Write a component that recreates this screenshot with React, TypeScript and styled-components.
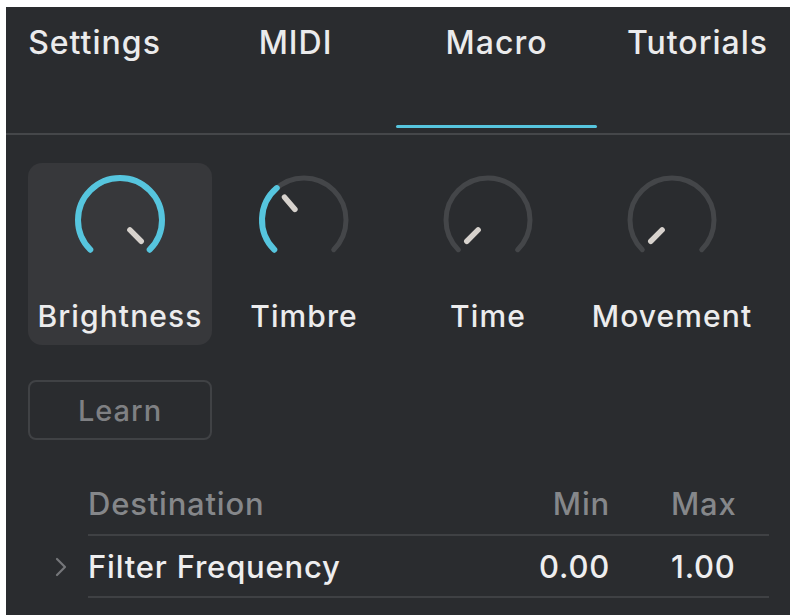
import React from "react";
import styled, { createGlobalStyle, css } from "styled-components";

const GlobalStyle = createGlobalStyle`
  html, body {
    margin: 0;
    padding: 0;
    background: #ffffff;
  }
  body {
    font-family: Inter, "Noto Sans", "Liberation Sans", sans-serif;
    -webkit-font-smoothing: antialiased;
  }
`;

const ACCENT = "#56c5de";
const TRACK = "#444649";
const POINTER = "#d7d2cd";

const Panel = styled.div`
  margin: 7px 0 0 6px;
  height: 608px;
  background: #2a2c2f;
  overflow: hidden;
  color: #e9e9ea;
`;

const TabBar = styled.div`
  display: grid;
  grid-template-columns: repeat(4, 201px);
  margin-left: -12px;
  padding-bottom: 5px;
  border-bottom: 2px solid #45474a;
`;

const Tab = styled.div`
  display: flex;
  flex-direction: column;
  align-items: center;
  height: 121px;
  font-size: 32px;
  font-weight: 500;
  letter-spacing: 1px;
  color: #ebebec;
`;

const TabLabel = styled.span`
  padding-top: 17px;
  line-height: 38px;
`;

const Indicator = styled.span<{ active?: boolean }>`
  margin-top: auto;
  width: 100%;
  height: 3px;
  border-radius: 2px;
  background: ${({ active }) => (active ? ACCENT : "transparent")};
`;

const Macros = styled.div`
  display: grid;
  grid-template-columns: repeat(4, 184px);
  margin: 28px 0 0 22px;
`;

const MacroCell = styled.div<{ selected?: boolean }>`
  display: flex;
  flex-direction: column;
  align-items: center;
  height: 182px;
  padding-top: 7px;
  box-sizing: border-box;
  border-radius: 14px;
  ${({ selected }) =>
    selected &&
    css`
      background: #37383b;
    `}
`;

const MacroName = styled.span`
  margin-top: 28px;
  font-size: 30px;
  font-weight: 500;
  line-height: 36px;
  letter-spacing: 1.1px;
  color: #ececed;
`;

const LearnButton = styled.button`
  display: block;
  margin: 35px 0 0 22px;
  width: 184px;
  height: 60px;
  background: transparent;
  border: 2px solid #404245;
  border-radius: 8px;
  font-family: inherit;
  font-size: 29px;
  font-weight: 500;
  letter-spacing: 1px;
  color: #7f8083;
`;

const Table = styled.div`
  margin: 32px 0 0 47px;
  width: 716px;
`;

const Row = styled.div`
  display: flex;
  align-items: stretch;
`;

const Chevron = styled.span`
  display: flex;
  align-items: center;
  width: 35px;
  color: #75777a;
`;

const RowBody = styled.div<{ head?: boolean }>`
  flex: 1;
  display: grid;
  grid-template-columns: 1fr 120px 156px;
  align-items: center;
  height: ${({ head }) => (head ? 62 : 60)}px;
  border-bottom: 2px solid #3f4144;
  font-size: 31px;
  font-weight: 500;
  letter-spacing: 0.8px;
  color: ${({ head }) => (head ? "#85878a" : "#eeeeef")};
`;

const NumCell = styled.span`
  text-align: right;
  padding-right: 3px;
`;

const MaxCell = styled.span`
  padding-left: 58px;
`;

type KnobProps = {
  value: number;
};

const polar = (cx: number, cy: number, r: number, deg: number) => {
  const rad = (deg * Math.PI) / 180;
  return [cx + r * Math.sin(rad), cy - r * Math.cos(rad)];
};

const arcPath = (from: number, to: number, r: number) => {
  const [x1, y1] = polar(50, 50, r, from);
  const [x2, y2] = polar(50, 50, r, to);
  const large = to - from > 180 ? 1 : 0;
  return `M ${x1} ${y1} A ${r} ${r} 0 ${large} 1 ${x2} ${y2}`;
};

// 270 degree dial, value 0..1 sweeps from lower-left to lower-right
const Knob = ({ value }: KnobProps): JSX.Element => {
  const start = -135;
  const end = 135;
  const angle = start + value * (end - start);
  const [px1, py1] = polar(50, 50, 14, angle);
  const [px2, py2] = polar(50, 50, 30, angle);

  return (
    <svg width="100" height="100" viewBox="0 0 100 100">
      <path d={arcPath(start, end, 42)} fill="none" stroke={TRACK} strokeWidth="5" strokeLinecap="round" />
      {value > 0 && (
        <path d={arcPath(start, angle, 42)} fill="none" stroke={ACCENT} strokeWidth="6" strokeLinecap="round" />
      )}
      <line x1={px1} y1={py1} x2={px2} y2={py2} stroke={POINTER} strokeWidth="5.5" strokeLinecap="round" />
    </svg>
  );
};

const tabs = ["Settings", "MIDI", "Macro", "Tutorials"];

const macros = [
  { name: "Brightness", value: 1 },
  { name: "Timbre", value: 0.35 },
  { name: "Time", value: 0 },
  { name: "Movement", value: 0 },
];

const App = (): JSX.Element => {
  return (
    <>
      <GlobalStyle />
      <Panel>
        <TabBar>
          {tabs.map((tab) => (
            <Tab key={tab}>
              <TabLabel>{tab}</TabLabel>
              <Indicator active={tab === "Macro"} />
            </Tab>
          ))}
        </TabBar>

        <Macros>
          {macros.map((macro, i) => (
            <MacroCell key={macro.name} selected={i === 0}>
              <Knob value={macro.value} />
              <MacroName>{macro.name}</MacroName>
            </MacroCell>
          ))}
        </Macros>

        <LearnButton>Learn</LearnButton>

        <Table>
          <Row>
            <Chevron />
            <RowBody head>
              <span>Destination</span>
              <NumCell>Min</NumCell>
              <MaxCell>Max</MaxCell>
            </RowBody>
          </Row>
          <Row>
            <Chevron>
              <svg width="16" height="22" viewBox="0 0 16 22">
                <path d="M4 3 L12 11 L4 19" fill="none" stroke="currentColor" strokeWidth="2.2" strokeLinecap="round" strokeLinejoin="round" />
              </svg>
            </Chevron>
            <RowBody>
              <span>Filter Frequency</span>
              <NumCell>0.00</NumCell>
              <MaxCell>1.00</MaxCell>
            </RowBody>
          </Row>
        </Table>
      </Panel>
    </>
  );
};

export default App;
